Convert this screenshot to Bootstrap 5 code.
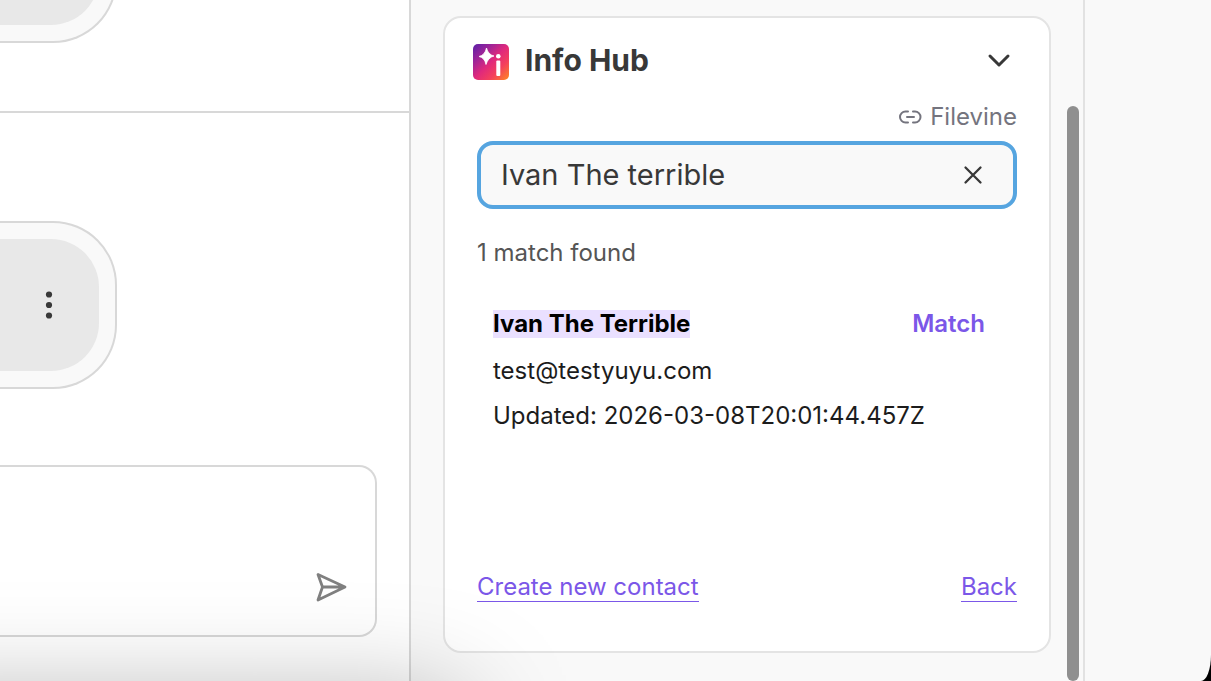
<!DOCTYPE html>
<html lang="en">
<head>
<meta charset="utf-8">
<meta name="viewport" content="width=device-width, initial-scale=1">
<title>Info Hub</title>
<link href="https://cdn.jsdelivr.net/npm/bootstrap@5.3.0/dist/css/bootstrap.min.css" rel="stylesheet">
<style>
  :root { --line: #d8d8d8; --soft: #f9f9f9; --accent: #7b57e8; --ink: #383838; }
  body { background: #000; font-family: Inter, "Liberation Sans", sans-serif; font-size: 24px; line-height: 32px; color: #1c1c1c; }
  .app-window { border-bottom-right-radius: 10px 26px; background: var(--soft); }
  .chat-pane { border-right: 2px solid var(--line); min-width: 0; }
  .chat-top { height: 113px; border-bottom: 2px solid var(--line); padding-bottom: 68px; }
  .bubble { width: 117px; height: 168px; padding: 16px 16px 16px 0; border: 2px solid var(--line); border-left: 0; border-radius: 0 64px 64px 0; background: var(--soft); }
  .bubble-fill { background: #e8e8e8; border-radius: 0 48px 48px 0; padding-right: 40px; }
  .chat-body { padding-top: 108px; }
  .composer { height: 172px; margin: 0 32px 44px 0; border: 2px solid var(--line); border-left: 0; border-radius: 0 18px 18px 0; }
  .composer textarea { resize: none; outline: 0; }
  .composer button { padding: 0 28px 32px 0; }
  .plain { background: none; border: 0; padding: 0; line-height: 0; }
  .hub-pane { padding-left: 32px; border-right: 2px solid #e2e2e2; }
  .hub-card { --bs-card-border-color: #e4e4e4; width: 608px; margin: 16px 16px 28px 0; border-width: 2px; border-radius: 18px; padding: 26px 32px 49px; }
  .hub-head { margin: 0 4px 0 -4px; }
  .hub-title { font-size: 30px; line-height: 32px; font-weight: 700; color: var(--ink); margin-left: 16px; }
  .source { color: #74747e; margin-top: 21px; }
  .search { margin-top: 8px; height: 68px; border: 4px solid #56a5e0; border-radius: 16px; background: var(--soft); padding: 0 28px 0 20px; }
  .search input { font-size: 29px; line-height: 36px; color: var(--ink); outline: 0; min-width: 0; }
  .found { color: #555; margin-top: 28px; }
  .result { padding: 40px 32px 0 16px; }
  .hit { background: #eae0ff; color: #000; font-weight: 700; line-height: 28px; }
  .match { color: var(--accent); font-weight: 600; line-height: 30px; }
  .email { margin: 16px 0 13px; }
  .accent-link { color: var(--accent); text-decoration: none; border-bottom: 1px solid currentColor; line-height: 28px; }
  .thumb { width: 12px; margin: 106px 4px 0 0; border-radius: 6px; background: #8f8f8f; }
  .rail { width: 126px; }
  .dock-shadow { left: -120px; width: 570px; height: 80px; bottom: -112px; box-shadow: 0 0 110px 10px rgba(0,0,0,.34); pointer-events: none; }
</style>
</head>
<body>
<div class="app-window d-flex vh-100 overflow-hidden position-relative">
  <main class="chat-pane bg-white flex-grow-1 d-flex flex-column">
    <div class="chat-top d-flex align-items-end overflow-hidden flex-shrink-0">
      <div class="bubble flex-shrink-0 d-flex"><div class="bubble-fill flex-grow-1"></div></div>
    </div>
    <div class="chat-body flex-grow-1">
      <div class="bubble d-flex">
        <div class="bubble-fill flex-grow-1 d-flex align-items-center justify-content-end">
          <button class="plain" type="button" aria-label="More options">
            <svg width="20" height="32" viewBox="0 0 20 32" fill="#383838"><circle cx="10" cy="5.500" r="3.100"/><circle cx="10" cy="16" r="3.100"/><circle cx="10" cy="26.500" r="3.100"/></svg>
          </button>
        </div>
      </div>
    </div>
    <form class="composer d-flex align-items-end flex-shrink-0 bg-white">
      <textarea class="plain flex-grow-1 h-100" aria-label="Message"></textarea>
      <button class="plain" type="button" aria-label="Send">
        <svg width="32" height="32" viewBox="0 0 32 32" fill="none" stroke="#808080" stroke-width="2.800" stroke-linejoin="round"><path d="M3 3.500 30 16 3 29 7.500 16ZM7.500 16H30"/></svg>
      </button>
    </form>
  </main>

  <aside class="hub-pane d-flex flex-shrink-0">
    <section class="hub-card card">
      <header class="hub-head d-flex align-items-start">
        <svg width="36" height="36" viewBox="0 0 36 36">
          <defs><linearGradient id="hubFill" x1="0" y1="0" x2="1" y2="1"><stop offset="0" stop-color="#5a1fa8"/><stop offset=".25" stop-color="#9a2499"/><stop offset=".5" stop-color="#e0297c"/><stop offset=".72" stop-color="#f4405c"/><stop offset="1" stop-color="#ff8a1e"/></linearGradient></defs>
          <rect width="36" height="36" rx="5" fill="url(#hubFill)"/>
          <path d="M13.500 4Q15 10.500 21 12Q15 13.500 13 20.500Q11.500 13.500 6 12.500Q12 11 13.500 4Z" fill="#fff" stroke="#fff" stroke-width=".8" stroke-linejoin="round"/>
          <circle cx="25.300" cy="12.300" r="2.300" fill="#fff"/><rect x="23.300" y="16.500" width="4" height="15.500" rx="1" fill="#fff"/>
        </svg>
        <h1 class="hub-title mb-0 me-auto">Info Hub</h1>
        <button class="plain" type="button" aria-label="Collapse">
          <svg width="28" height="32" viewBox="0 0 28 32" fill="none" stroke="#383838" stroke-width="3" stroke-linecap="round" stroke-linejoin="round"><path d="m5 12 9 9 9-9"/></svg>
        </button>
      </header>
      <div class="source d-flex align-items-center justify-content-end gap-2">
        <svg width="24" height="24" viewBox="0 0 24 24" fill="none" stroke="#74747e" stroke-width="2" stroke-linecap="round"><path d="M10 6.500H7.500a5.500 5.500 0 0 0 0 11h2.500M15 6.500H17a5.500 5.500 0 0 1 0 11h-2M9 12h7"/></svg>
        <span>Filevine</span>
      </div>
      <div class="search d-flex align-items-center">
        <input class="plain flex-grow-1" type="text" value="Ivan The terrible" aria-label="Search contacts">
        <button class="plain" type="button" aria-label="Clear search">
          <svg width="24" height="24" viewBox="0 0 24 24" fill="none" stroke="#383838" stroke-width="2.300" stroke-linecap="round"><path d="m4.500 4.500 15 15M19.500 4.500l-15 15"/></svg>
        </button>
      </div>
      <p class="found mb-0">1 match found</p>
      <div class="result">
        <div class="d-flex justify-content-between align-items-center">
          <span class="hit">Ivan The Terrible</span>
          <button class="plain match" type="button">Match</button>
        </div>
        <div class="email">test@testyuyu.com</div>
        <div>Updated: 2026-03-08T20:01:44.457Z</div>
      </div>
      <div class="d-flex justify-content-between mt-auto">
        <a class="accent-link" href="#">Create new contact</a>
        <a class="accent-link" href="#">Back</a>
      </div>
    </section>
    <div class="thumb"></div>
  </aside>
  <div class="rail flex-shrink-0"></div>
  <div class="dock-shadow position-absolute"></div>
</div>
<script src="https://cdn.jsdelivr.net/npm/bootstrap@5.3.0/dist/js/bootstrap.bundle.min.js"></script>
</body>
</html>
